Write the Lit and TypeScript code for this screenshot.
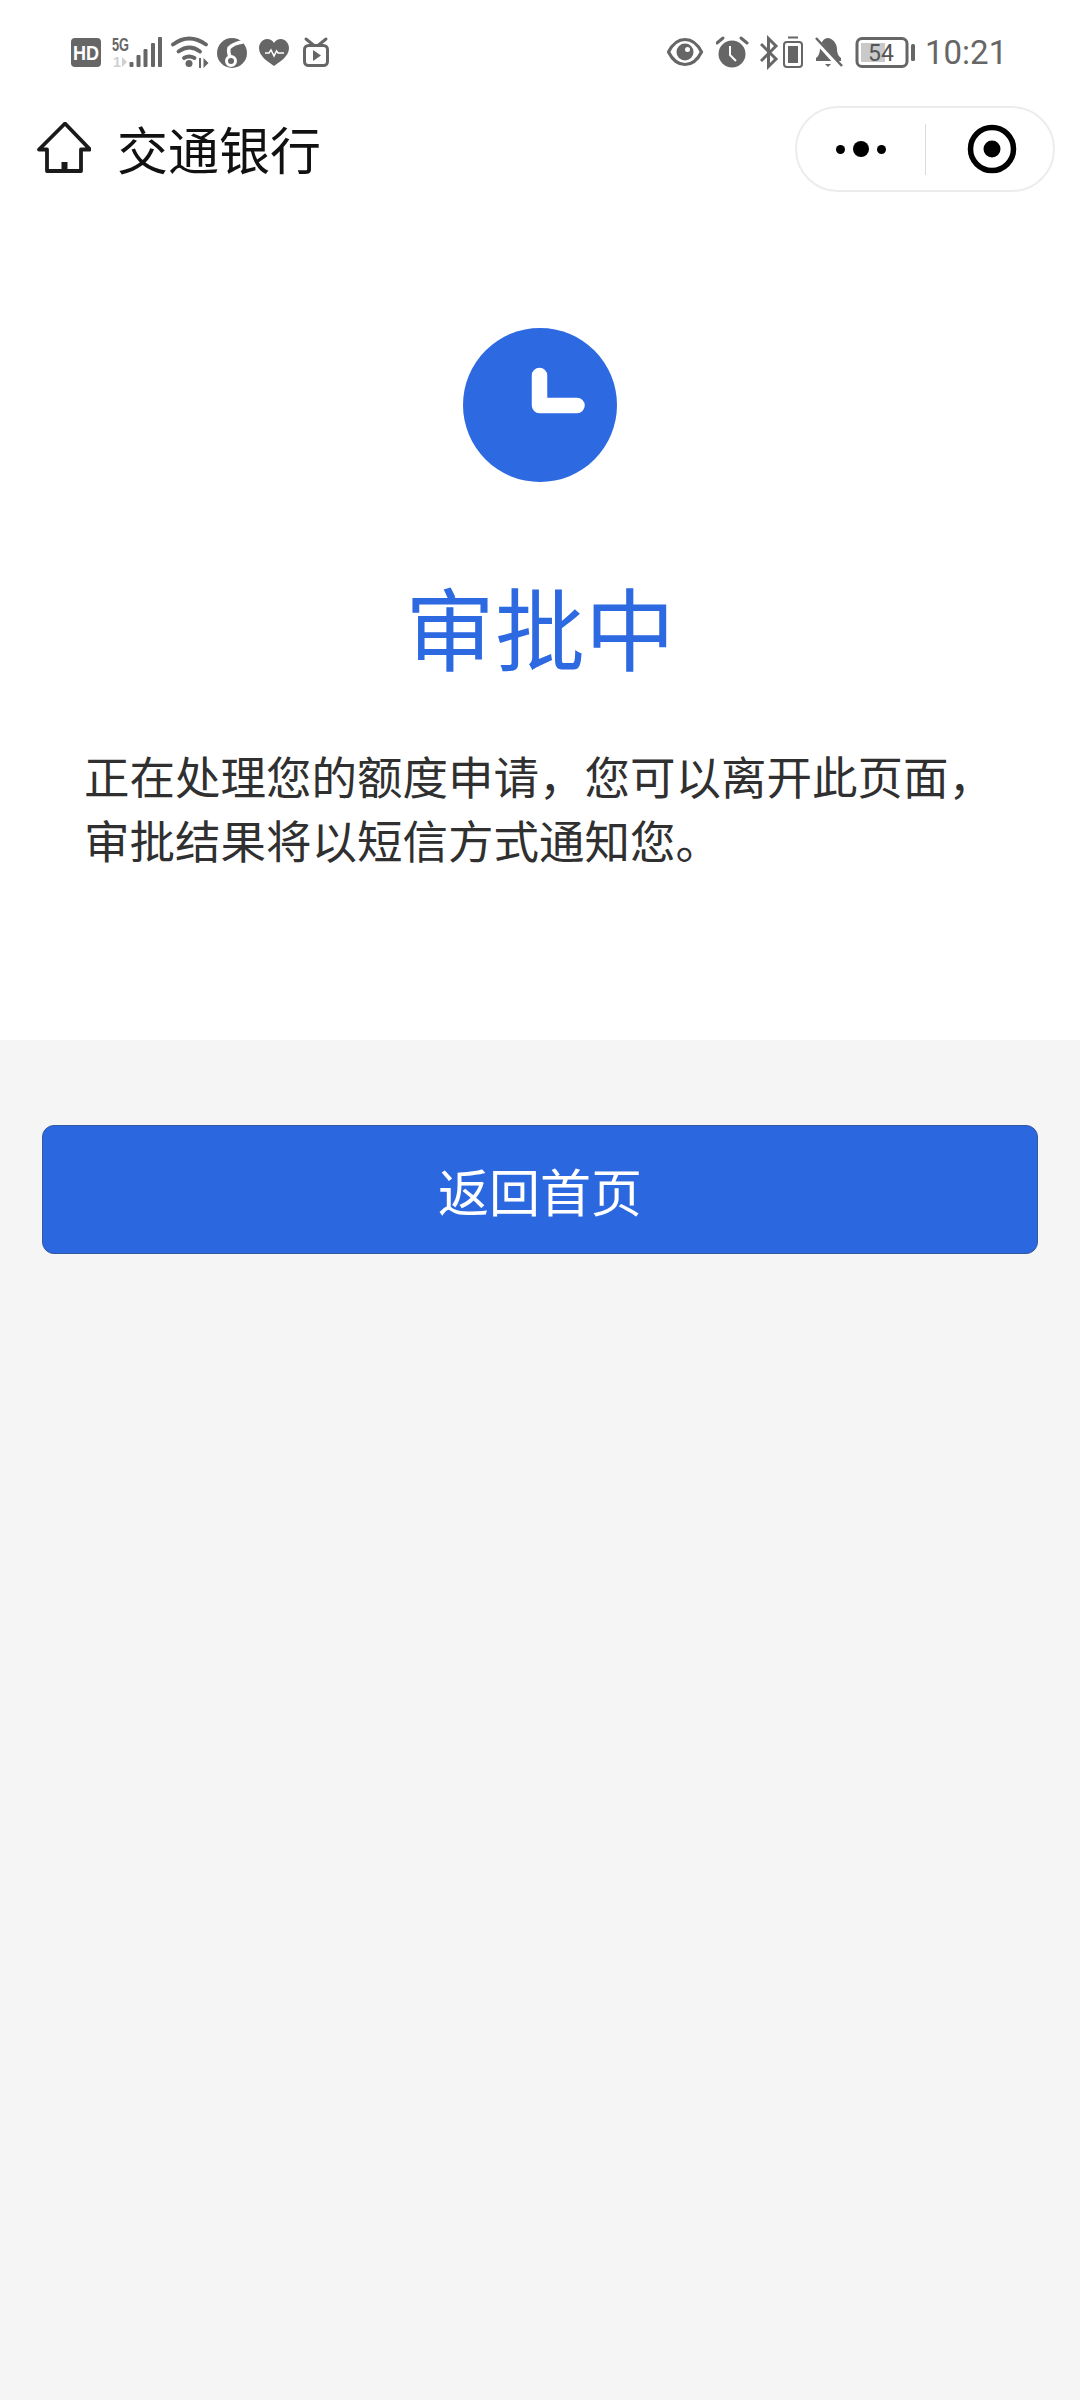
import { LitElement, html, css, svg } from "lit";
import { customElement } from "lit/decorators.js";

const G = "#666666";

const icon = (x: number, w: number, body: unknown, cls = "") => html`<svg class="ico ${cls}" width=${w} height="44" viewBox="${x} 30 ${w} 44">${body}</svg>`;

@customElement("app-root")
export class AppRoot extends LitElement {
  static styles = css`
    :host { display: block; min-height: 2400px; background: #f5f5f5; font-family: "Noto Sans CJK SC", "Noto Sans", sans-serif; }
    .top { background: #fff; }
    .status { height: 104px; padding: 0 0 0 71px; display: flex; align-items: center; box-sizing: border-box; }
    .status .ico { display: block; flex: none; }
    .spacer { flex: 1; }
    .time { font-family: Roboto, sans-serif; font-size: 33px; color: #666; width: 79px; margin-left: 9px; margin-right: 76px; white-space: nowrap; }
    .nav { height: 90px; display: flex; align-items: center; }
    .home { margin-left: 37px; margin-top: -2px; flex: none; display: block; }
    .nav-title { margin-left: 26px; font-size: 51px; line-height: 88px; height: 90px; color: #111; flex: 1; }
    .capsule { width: 260px; height: 86px; box-sizing: border-box; margin-right: 25px; border: 2px solid #ececec; border-radius: 43px; display: flex; align-items: center; background: #fff; }
    .cap-btn { flex: 1; display: flex; justify-content: center; align-items: center; height: 100%; }
    .cap-div { width: 1px; height: 51px; background: #dcdcdc; flex: none; }
    .dots { display: flex; align-items: center; gap: 8px; }
    .dot { width: 9px; height: 9px; border-radius: 50%; background: #000; }
    .dot.big { width: 16px; height: 16px; }
    .target { margin-left: 6px; display: block; }
    .hero { padding: 134px 84px 169px; display: flex; flex-direction: column; align-items: center; }
    .clock { display: block; }
    .title { margin-top: 91px; font-size: 90px; line-height: 104px; color: #2d69e0; }
    .desc { margin: 66px 0 0; align-self: stretch; white-space: nowrap; font-size: 45.5px; line-height: 64px; color: #303030; }
    .actions { padding: 85px 42px 0; }
    .btn { height: 129px; box-sizing: border-box; border: 1px solid #34589f; border-radius: 12px; background: #2b68e0; color: #fff; font-size: 51px; display: flex; align-items: center; justify-content: center; }
    .hd { font: 700 20px "Liberation Sans", sans-serif; fill: #fff; }
    .g5 { font: 700 18px "Liberation Sans", sans-serif; fill: #666; }
    .g1 { font: 700 14px "Liberation Sans", sans-serif; fill: #cfcfcf; }
    .bn { font: 400 23px Roboto, sans-serif; fill: #555; }
  `;

  render() {
    const hd = svg`<rect x="71" y="38" width="30" height="29" rx="4" fill=${G}/><text class="hd" x="86" y="60" text-anchor="middle" textLength="26" lengthAdjust="spacingAndGlyphs">HD</text>`;
    const signal = svg`<text class="g5" x="112" y="51" textLength="17" lengthAdjust="spacingAndGlyphs">5G</text>
      <text class="g1" x="113" y="67" textLength="8" lengthAdjust="spacingAndGlyphs">1</text><path d="M122 57v10l5-5z" fill="#cfcfcf"/>
      <g fill=${G}><rect x="129.500" y="62" width="4" height="5" rx="1"/><rect x="136.500" y="55" width="4" height="12" rx="1"/><rect x="143.500" y="49" width="4" height="18" rx="1"/><rect x="151" y="43" width="4" height="24" rx="1"/><rect x="158" y="37" width="4" height="30" rx="1"/></g>`;
    const wifi = svg`<g fill="none" stroke=${G} stroke-width="3.800" stroke-linecap="round"><path d="M173 44.500q16-12 33 0"/><path d="M178.500 51.500q11-8 21.500 0"/><path d="M184 58q5-3 10.500 0"/></g><circle cx="189" cy="63.500" r="3.500" fill=${G}/><path d="M199 58v10h2v-10zM203.500 58v10l5-5z" fill=${G}/>`;
    const globe = svg`<circle cx="232" cy="53" r="15" fill=${G}/><path d="M243 42q-9 1-14 6-1 4 1 9" fill="none" stroke="#fff" stroke-width="3.500"/><circle cx="231" cy="61" r="4.500" fill="none" stroke="#fff" stroke-width="3"/>`;
    const heart = svg`<path d="M274 66c-5-4-15-9-15-18 0-5 4-9 8-9 3 0 5.500 1.500 7 4 1.500-2.500 4-4 7-4 4 0 8 4 8 9 0 9-10 14-15 18z" fill=${G}/><path d="M265 53h4l2-3 3 6 2.500-5 1.500 2h6" fill="none" stroke="#fff" stroke-width="1.500"/>`;
    const tv = svg`<rect x="304.500" y="45.500" width="23" height="20" rx="4" fill="none" stroke=${G} stroke-width="3"/><path d="M306 39l8 6.500M326 39l-8 6.500" stroke=${G} stroke-width="3" stroke-linecap="round"/><path d="M313 50v11l8-5.500z" fill=${G}/>`;

    const eye = svg`<path d="M668.500 52c4-8 10-12.500 16.500-12.500S697.500 44 701.500 52c-4 8-10 12.500-16.500 12.500S672.500 60 668.500 52z" fill="none" stroke=${G} stroke-width="3.200"/><circle cx="685" cy="52" r="8.500" fill=${G}/><circle cx="687.500" cy="49.500" r="2.500" fill="#fff"/>`;
    const alarm = svg`<circle cx="732" cy="54" r="13.500" fill=${G}/><path d="M717 43l6-5M747 43l-6-5" stroke=${G} stroke-width="3" stroke-linecap="round"/><path d="M730 46v9l6 6" fill="none" stroke="#fff" stroke-width="2"/>`;
    const bt = svg`<path d="M761 44l15 15-7.500 7.500v-28l7.500 7.500-15 15" fill="none" stroke=${G} stroke-width="3"/>`;
    const smallBat = svg`<path d="M788 37.500h10" stroke=${G} stroke-width="2"/><rect x="784" y="42" width="18" height="25" rx="3" fill="none" stroke=${G} stroke-width="2"/><rect x="788" y="46" width="10" height="17" fill=${G}/>`;
    const bell = svg`<path d="M816 58c3-2 4-6 4-10 0-5 4-10 8-10s9 5 9 11c0 4 1 7 4 9v3h-25z" fill=${G}/><path d="M825 64h6l-3 3z" fill=${G}/><path d="M814 38l26 29" stroke="#fff" stroke-width="5"/><path d="M816 38l26 28" stroke=${G} stroke-width="2.500"/>`;
    const battery = svg`<rect x="857" y="38.500" width="50" height="28" rx="5" fill="none" stroke=${G} stroke-width="3"/><rect x="861" y="43" width="24" height="19" fill="#c9c9c9"/><text class="bn" x="881" y="60.500" text-anchor="middle">54</text><rect x="911" y="44" width="4" height="17" rx="1.500" fill=${G}/>`;

    return html`
      <div class="top">
        <div class="status">
          ${icon(71, 40, hd)}${icon(111, 60, signal)}${icon(171, 46, wifi)}${icon(217, 42, globe)}${icon(259, 44, heart)}${icon(303, 27, tv)}
          <div class="spacer"></div>
          ${icon(667, 49, eye)}${icon(716, 44, alarm)}${icon(760, 23, bt)}${icon(783, 31, smallBat)}${icon(814, 41, bell)}${icon(855, 61, battery)}
          <div class="time">10:21</div>
        </div>
        <div class="nav">
          <svg class="home" width="54" height="52" viewBox="36 122 54 52"><path d="M64 123.500L89 149.500H80V171H46V149.500H38L64 123.500Z" fill="none" stroke="#1a1a1a" stroke-width="3.800" stroke-linejoin="round"/><rect x="60.500" y="162" width="6" height="9" fill="#1a1a1a"/></svg>
          <div class="nav-title">交通银行</div>
          <div class="capsule">
            <div class="cap-btn"><div class="dots"><span class="dot"></span><span class="dot big"></span><span class="dot"></span></div></div>
            <div class="cap-div"></div>
            <div class="cap-btn"><svg class="target" width="50" height="50" viewBox="0 0 50 50"><circle cx="25" cy="25" r="21.500" fill="none" stroke="#000" stroke-width="5.500"/><circle cx="25" cy="25" r="8.500" fill="#000"/></svg></div>
          </div>
        </div>
        <div class="hero">
          <svg class="clock" width="154" height="154" viewBox="0 0 154 154"><circle cx="77" cy="77" r="77" fill="#2d69e0"/><path d="M76.500 47.500V77.500H114" fill="none" stroke="#fff" stroke-width="15.500" stroke-linecap="round" stroke-linejoin="round"/></svg>
          <div class="title">审批中</div>
          <p class="desc">正在处理您的额度申请，您可以离开此页面，<br />审批结果将以短信方式通知您。</p>
        </div>
      </div>
      <div class="actions"><div class="btn">返回首页</div></div>
    `;
  }
}
